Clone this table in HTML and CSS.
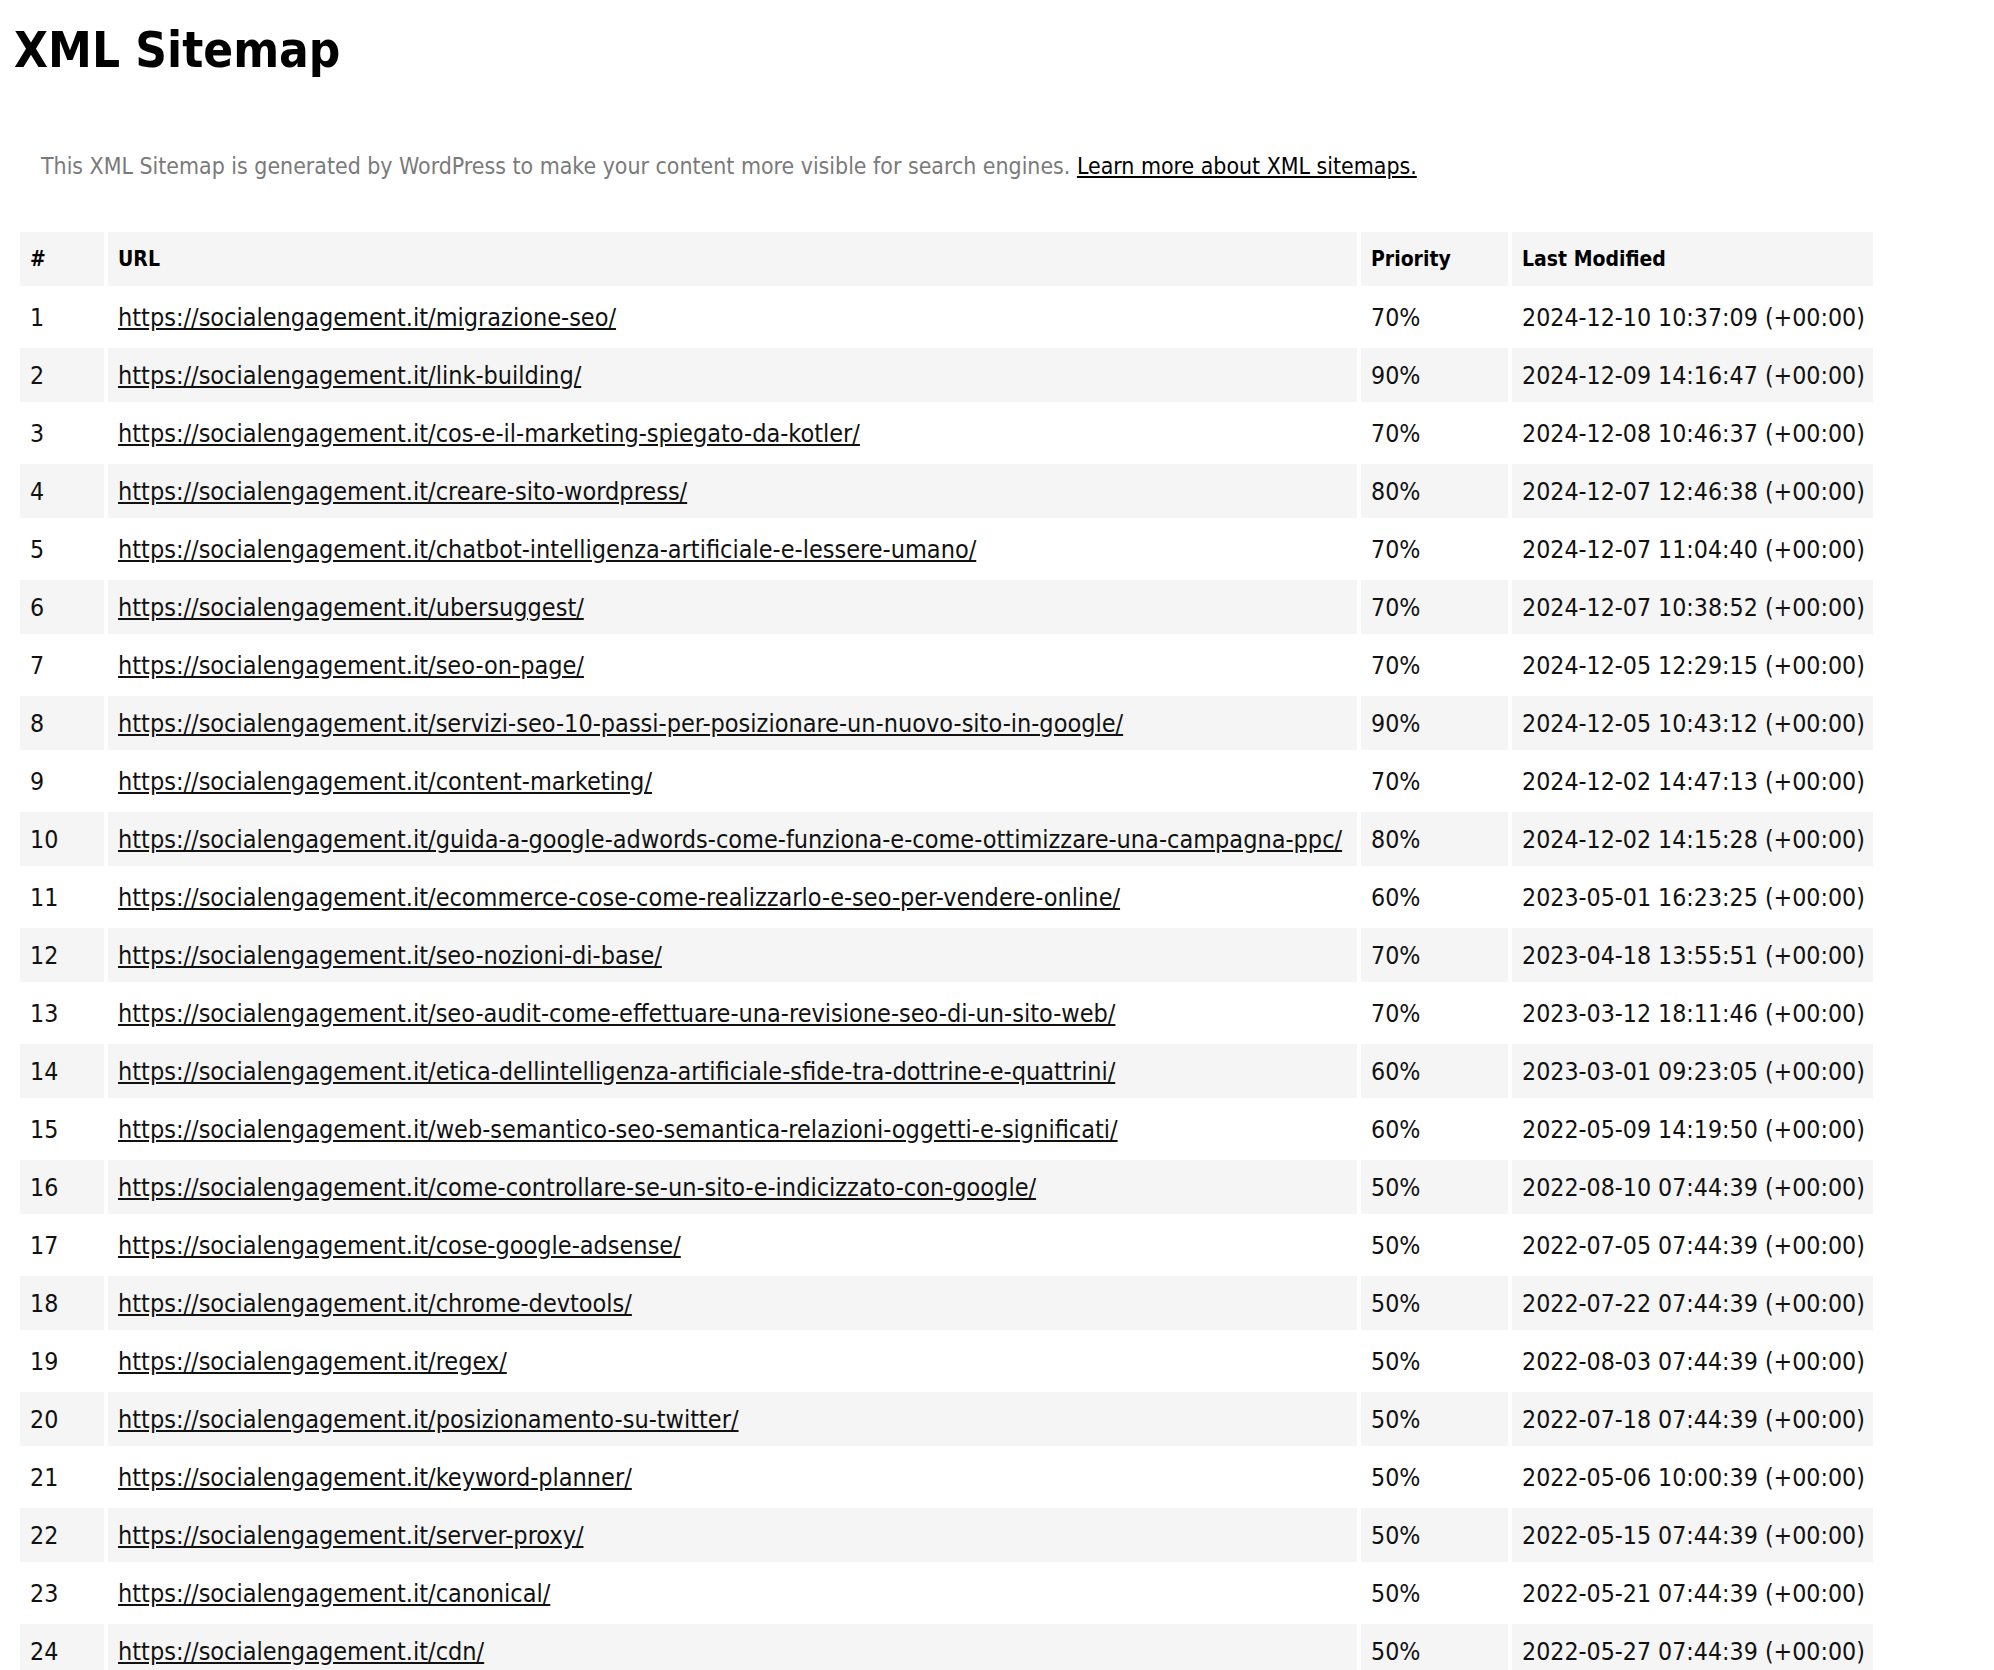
FILE: index.html
```html
<!DOCTYPE html>
<html lang="en">
<head>
<meta charset="utf-8">
<title>XML Sitemap</title>
<link rel="stylesheet" href="styles.css">
</head>
<body>
<div class="page">
  <h1 class="title">XML Sitemap</h1>
  <p class="intro">This XML Sitemap is generated by WordPress to make your content more visible for search engines. <a href="#" class="intro-link">Learn more about XML sitemaps.</a></p>
  <table class="sitemap">
    <colgroup>
      <col class="c-num">
      <col class="c-url">
      <col class="c-pri">
      <col class="c-mod">
    </colgroup>
    <thead>
      <tr><th>#</th><th>URL</th><th>Priority</th><th>Last Modified</th></tr>
    </thead>
    <tbody>
      <tr><td>1</td><td><a href="#">https://socialengagement.it/migrazione-seo/</a></td><td>70%</td><td>2024-12-10 10:37:09 (+00:00)</td></tr>
      <tr><td>2</td><td><a href="#">https://socialengagement.it/link-building/</a></td><td>90%</td><td>2024-12-09 14:16:47 (+00:00)</td></tr>
      <tr><td>3</td><td><a href="#">https://socialengagement.it/cos-e-il-marketing-spiegato-da-kotler/</a></td><td>70%</td><td>2024-12-08 10:46:37 (+00:00)</td></tr>
      <tr><td>4</td><td><a href="#">https://socialengagement.it/creare-sito-wordpress/</a></td><td>80%</td><td>2024-12-07 12:46:38 (+00:00)</td></tr>
      <tr><td>5</td><td><a href="#">https://socialengagement.it/chatbot-intelligenza-artificiale-e-lessere-umano/</a></td><td>70%</td><td>2024-12-07 11:04:40 (+00:00)</td></tr>
      <tr><td>6</td><td><a href="#">https://socialengagement.it/ubersuggest/</a></td><td>70%</td><td>2024-12-07 10:38:52 (+00:00)</td></tr>
      <tr><td>7</td><td><a href="#">https://socialengagement.it/seo-on-page/</a></td><td>70%</td><td>2024-12-05 12:29:15 (+00:00)</td></tr>
      <tr><td>8</td><td><a href="#">https://socialengagement.it/servizi-seo-10-passi-per-posizionare-un-nuovo-sito-in-google/</a></td><td>90%</td><td>2024-12-05 10:43:12 (+00:00)</td></tr>
      <tr><td>9</td><td><a href="#">https://socialengagement.it/content-marketing/</a></td><td>70%</td><td>2024-12-02 14:47:13 (+00:00)</td></tr>
      <tr><td>10</td><td><a href="#">https://socialengagement.it/guida-a-google-adwords-come-funziona-e-come-ottimizzare-una-campagna-ppc/</a></td><td>80%</td><td>2024-12-02 14:15:28 (+00:00)</td></tr>
      <tr><td>11</td><td><a href="#">https://socialengagement.it/ecommerce-cose-come-realizzarlo-e-seo-per-vendere-online/</a></td><td>60%</td><td>2023-05-01 16:23:25 (+00:00)</td></tr>
      <tr><td>12</td><td><a href="#">https://socialengagement.it/seo-nozioni-di-base/</a></td><td>70%</td><td>2023-04-18 13:55:51 (+00:00)</td></tr>
      <tr><td>13</td><td><a href="#">https://socialengagement.it/seo-audit-come-effettuare-una-revisione-seo-di-un-sito-web/</a></td><td>70%</td><td>2023-03-12 18:11:46 (+00:00)</td></tr>
      <tr><td>14</td><td><a href="#">https://socialengagement.it/etica-dellintelligenza-artificiale-sfide-tra-dottrine-e-quattrini/</a></td><td>60%</td><td>2023-03-01 09:23:05 (+00:00)</td></tr>
      <tr><td>15</td><td><a href="#">https://socialengagement.it/web-semantico-seo-semantica-relazioni-oggetti-e-significati/</a></td><td>60%</td><td>2022-05-09 14:19:50 (+00:00)</td></tr>
      <tr><td>16</td><td><a href="#">https://socialengagement.it/come-controllare-se-un-sito-e-indicizzato-con-google/</a></td><td>50%</td><td>2022-08-10 07:44:39 (+00:00)</td></tr>
      <tr><td>17</td><td><a href="#">https://socialengagement.it/cose-google-adsense/</a></td><td>50%</td><td>2022-07-05 07:44:39 (+00:00)</td></tr>
      <tr><td>18</td><td><a href="#">https://socialengagement.it/chrome-devtools/</a></td><td>50%</td><td>2022-07-22 07:44:39 (+00:00)</td></tr>
      <tr><td>19</td><td><a href="#">https://socialengagement.it/regex/</a></td><td>50%</td><td>2022-08-03 07:44:39 (+00:00)</td></tr>
      <tr><td>20</td><td><a href="#">https://socialengagement.it/posizionamento-su-twitter/</a></td><td>50%</td><td>2022-07-18 07:44:39 (+00:00)</td></tr>
      <tr><td>21</td><td><a href="#">https://socialengagement.it/keyword-planner/</a></td><td>50%</td><td>2022-05-06 10:00:39 (+00:00)</td></tr>
      <tr><td>22</td><td><a href="#">https://socialengagement.it/server-proxy/</a></td><td>50%</td><td>2022-05-15 07:44:39 (+00:00)</td></tr>
      <tr><td>23</td><td><a href="#">https://socialengagement.it/canonical/</a></td><td>50%</td><td>2022-05-21 07:44:39 (+00:00)</td></tr>
      <tr><td>24</td><td><a href="#">https://socialengagement.it/cdn/</a></td><td>50%</td><td>2022-05-27 07:44:39 (+00:00)</td></tr>
    </tbody>
  </table>
</div>
</body>
</html>
```
FILE: styles.css
```css
html, body {
  margin: 0;
  padding: 0;
  background: #ffffff;
}

body {
  font-family: "DejaVu Sans Condensed", "DejaVu Sans", sans-serif;
  font-stretch: semi-condensed;
  color: #111111;
}

.page {
  padding: 22px 16px 0 16px;
}

.title {
  margin: 0 0 0 -2px;
  font-size: 49px;
  line-height: 58px;
  font-weight: bold;
  color: #000000;
}

.intro {
  margin: 73px 0 0 25px;
  font-size: 22.9px;
  line-height: 26px;
  color: #7a7a7a;
}

.intro-link {
  color: #000000;
  text-decoration: underline;
}

.sitemap {
  margin-top: 49px;
  width: 1861px;
  table-layout: fixed;
  border-collapse: separate;
  border-spacing: 4px;
  margin-left: 0;
}

.c-num { width: 84px; }
.c-url { width: 1249px; }
.c-pri { width: 147px; }
.c-mod { width: 361px; }

.sitemap th,
.sitemap td {
  height: 54px;
  padding: 0 10px;
  text-align: left;
  vertical-align: middle;
  white-space: nowrap;
  box-sizing: border-box;
}

.sitemap th {
  font-size: 21px;
  font-weight: bold;
  color: #000000;
  background: #f5f5f5;
}

.sitemap td {
  font-size: 24.7px;
  color: #111111;
}

.sitemap tbody tr:nth-child(even) td {
  background: #f5f5f5;
}

.sitemap td a {
  font-size: 25px;
  color: #111111;
  text-decoration: underline;
}
```
